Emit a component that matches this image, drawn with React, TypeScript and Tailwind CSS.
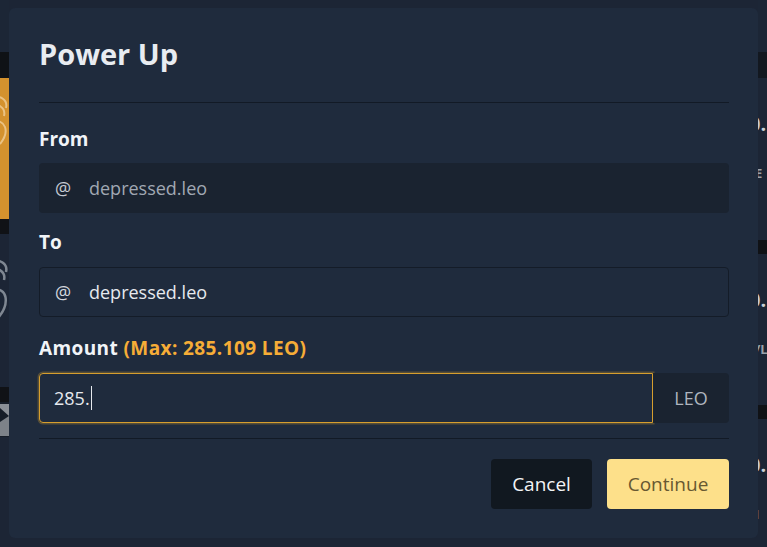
import React from "react";

const font = { fontFamily: '"Open Sans", "Noto Sans", sans-serif' };

function LeftStrip() {
  return (
    <div className="flex w-[9px] shrink-0 flex-col">
      <div className="h-[52px] bg-[#1c2636]" />
      <div className="h-[26px] bg-[#0f1216]" />
      <div className="relative h-[141px] overflow-hidden bg-[#d4922e]">
        <svg className="absolute left-[-14px] top-[14px]" width="26" height="60" viewBox="0 0 26 60">
          <path d="M4 6 C14 2 22 8 20 16 M2 14 C12 10 20 16 18 24 M6 30 C20 26 24 40 14 52" stroke="#f3d7a8" strokeWidth="2" fill="none" opacity="0.7" />
        </svg>
      </div>
      <div className="h-[15px] bg-[#101216]" />
      <div className="relative h-[153px] overflow-hidden bg-[#1c2535]">
        <svg className="absolute left-[-14px] top-[22px]" width="26" height="70" viewBox="0 0 26 70">
          <path d="M4 6 C14 2 22 8 20 16 M2 14 C12 10 20 16 18 24 M6 34 C22 30 24 48 12 62" stroke="#8b929c" strokeWidth="2.5" fill="none" opacity="0.9" />
        </svg>
      </div>
      <div className="h-[15px] bg-[#101216]" />
      <div className="relative h-[35px] overflow-hidden bg-[#161d28]">
        <svg className="absolute left-0 top-0" width="9" height="35" viewBox="0 0 9 35">
          <polygon points="0,2 9,2 9,14 0,6" fill="#8a8f96" />
          <polygon points="0,20 9,14 9,34 0,34" fill="#7d8289" />
        </svg>
      </div>
      <div className="flex-1 bg-[#1c2535]" />
    </div>
  );
}

function RightCard({ small, top }: { small: string; top: number }) {
  return (
    <div className="relative flex flex-col overflow-hidden bg-[#1c2535]" style={{ height: top }}>
      <div className="ml-[-9px] mt-[34px] text-[20px] font-bold leading-[24px] text-[#c9ced6]" style={font}>
        0.
      </div>
      <div className="ml-[-3px] mt-[29px] text-[13px] font-bold leading-[16px] text-[#9aa1ab]" style={font}>
        {small}
      </div>
    </div>
  );
}

function RightStrip() {
  return (
    <div className="flex w-[9px] shrink-0 flex-col">
      <div className="h-[52px] bg-[#1c2636]" />
      <div className="h-[26px] bg-[#131820]" />
      <RightCard small="E" top={162} />
      <div className="h-[14px] bg-[#101216]" />
      <RightCard small="/L" top={151} />
      <div className="h-[14px] bg-[#101216]" />
      <RightCard small="I" top={200} />
    </div>
  );
}

export default function App() {
  return (
    <div className="relative h-[547px] w-[767px] overflow-hidden bg-[#0d1117]" style={font}>
      {/* page behind the dialog */}
      <div className="flex h-full flex-col">
        <div className="h-[8px] bg-[#0c1016]" />
        <div className="flex flex-1">
          <LeftStrip />
          <div className="flex-1 bg-[#1c2535]" />
          <RightStrip />
        </div>
        <div className="flex h-[9px]">
          <div className="w-[723px] bg-[#0d1117]" />
          <div className="flex-1 bg-[#1c2434]" />
        </div>
      </div>

      {/* dialog */}
      <div className="absolute left-[9px] top-[8px] flex h-[530px] w-[749px] flex-col rounded-[6px] bg-[#1f2b3d] pl-[30px] pr-[29px] pt-[25px]">
        <h2 className="text-[29px] font-bold leading-[42px] text-[#e8ecf1]">Power Up</h2>
        <div className="mt-[27px] h-px bg-[#121a26]" />

        <label className="mt-[23px] text-[19px] font-bold leading-[27px] text-[#f1f4f8]">From</label>
        <div className="mt-[10px] flex h-[50px] items-center rounded-[4px] bg-[#1a2330] pl-[16px] text-[18px]">
          <span className="w-[34px] text-[#c5cad2]">@</span>
          <span className="text-[#a1a8b3]">depressed.leo</span>
        </div>

        <label className="mt-[16px] text-[19px] font-bold leading-[27px] text-[#f1f4f8]">To</label>
        <div className="mt-[11px] flex h-[50px] items-center rounded-[4px] border border-[#141c28] pl-[15px] text-[18px]">
          <span className="w-[34px] text-[#d3d7dd]">@</span>
          <span className="text-[#e6e9ee]">depressed.leo</span>
        </div>

        <label className="mt-[18px] text-[19px] font-bold leading-[27px] tracking-[0.4px] text-[#f1f4f8]">
          Amount <span className="text-[#f6ad37]">(Max: 285.109 LEO)</span>
        </label>
        <div className="mt-[11px] flex h-[50px]">
          <div className="flex flex-1 items-center rounded-l-[4px] border-[1.5px] border-[#d69e2e] pl-[14px] text-[18px] text-[#e6e9ee] shadow-[0_0_0_1.5px_rgba(214,158,46,0.3)]">
            <span>285.</span>
            <span className="ml-px h-[24px] w-px bg-[#e6e9ee]" />
          </div>
          <div className="flex w-[76px] items-center justify-center rounded-r-[4px] bg-[#1a2330] text-[18px] text-[#aeb5bf]">
            LEO
          </div>
        </div>

        <div className="mt-[15px] h-px bg-[#121a26]" />

        <div className="mt-[20px] flex justify-end gap-[15px]">
          <button className="h-[50px] w-[101px] rounded-[4px] bg-[#111820] text-[19px] text-[#f3f4f6]">
            Cancel
          </button>
          <button className="h-[50px] w-[122px] rounded-[4px] bg-[#fde08a] text-[19px] text-[#675831]">
            Continue
          </button>
        </div>
      </div>
    </div>
  );
}
